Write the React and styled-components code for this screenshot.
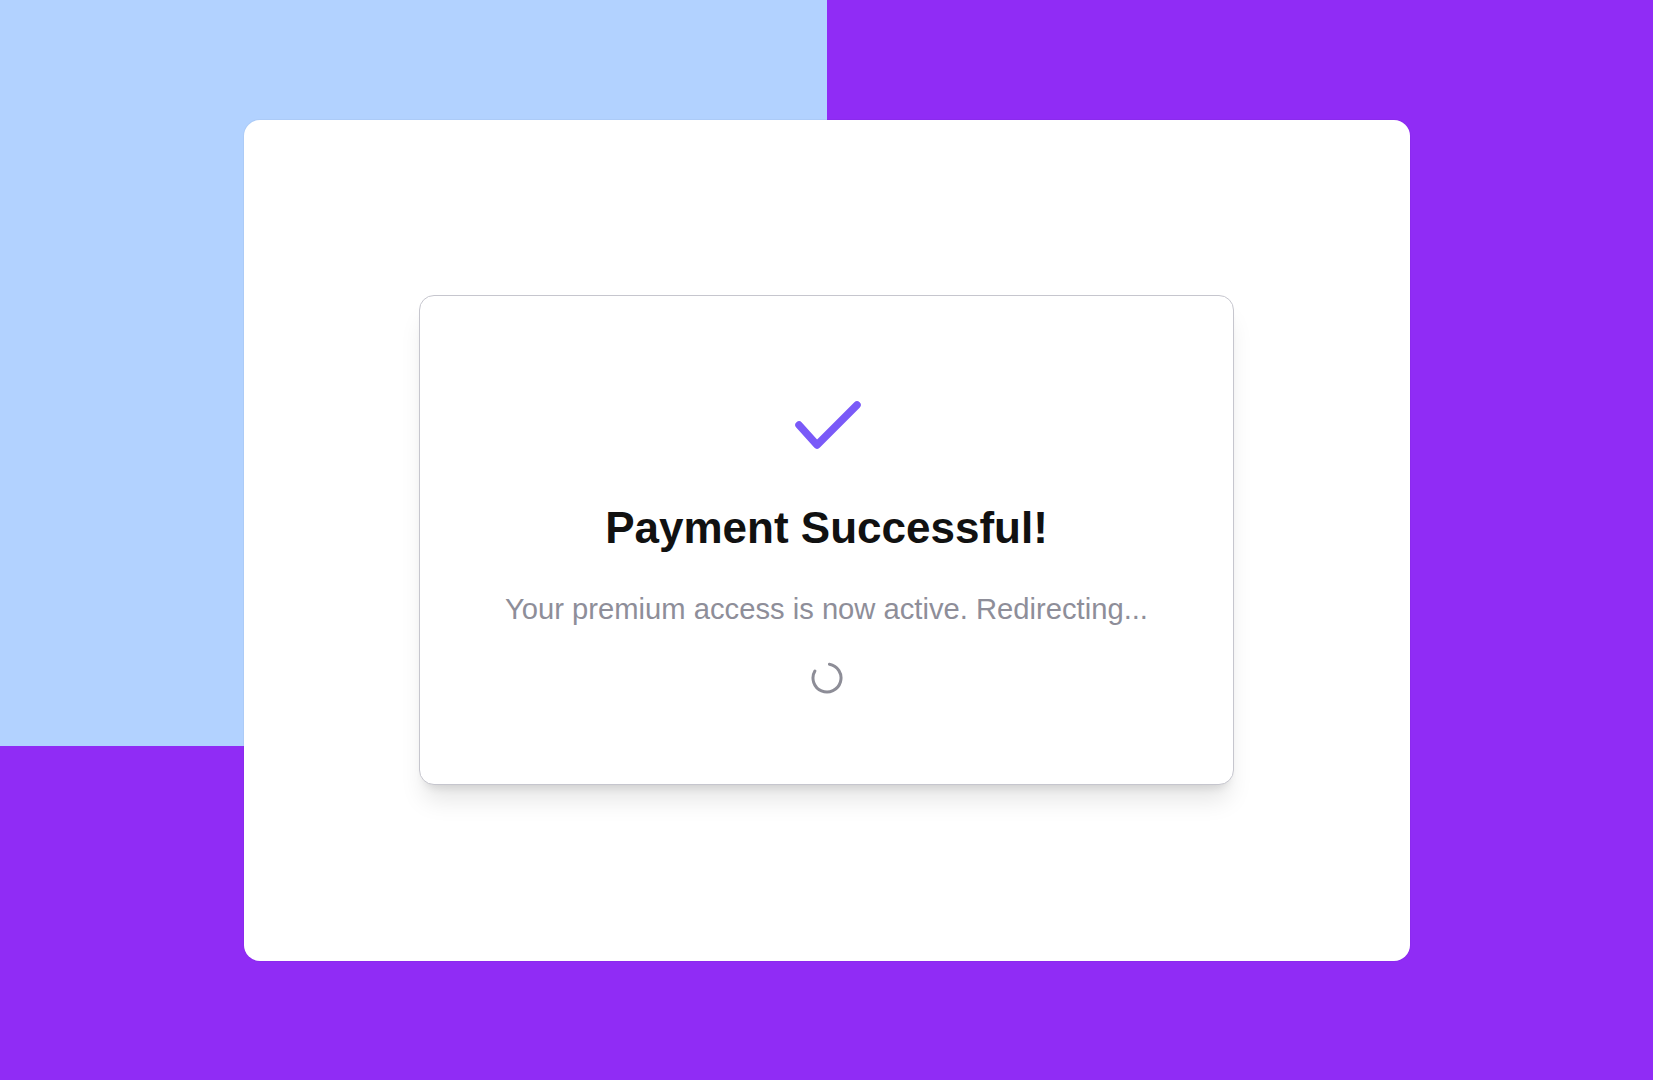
import React from 'react';
import styled, { createGlobalStyle } from 'styled-components';

const GlobalStyle = createGlobalStyle`
	* {
		box-sizing: border-box;
	}
	html,
	body {
		margin: 0;
		padding: 0;
	}
	body {
		font-family: 'Liberation Sans', Helvetica, Arial, sans-serif;
		-webkit-font-smoothing: antialiased;
	}
`;

const App = () => {
	return (
		<>
			<GlobalStyle />
			<Backdrop>
				<Panel>
					<SuccessCard>
						<CheckMark width="70" height="54" viewBox="0 0 70 54" fill="none">
							<polyline
								points="7,27 25,47 65,7"
								stroke="#7a5af8"
								strokeWidth="7.5"
								strokeLinecap="round"
								strokeLinejoin="round"
							/>
						</CheckMark>
						<Title>Payment Successful!</Title>
						<Message>Your premium access is now active. Redirecting...</Message>
						<Spinner width="32" height="32" viewBox="0 0 32 32" fill="none">
							<path
								d="M18.43 2.21 A14 14 0 1 1 3.88 9"
								stroke="#8d8d97"
								strokeWidth="3"
								strokeLinecap="round"
							/>
						</Spinner>
					</SuccessCard>
				</Panel>
			</Backdrop>
		</>
	);
};

const Backdrop = styled.div`
	width: 100%;
	min-height: 100vh;
	display: flex;
	align-items: center;
	justify-content: center;
	background:
		linear-gradient(#b2d2ff, #b2d2ff) 0 0 / 827px 746px no-repeat,
		#902cf5;
`;

const Panel = styled.main`
	width: 1166px;
	height: 841px;
	display: flex;
	align-items: center;
	justify-content: center;
	background: #ffffff;
	border-radius: 16px;
	box-shadow: 0 0 0 1px rgba(0, 0, 0, 0.03);
`;

const SuccessCard = styled.section`
	width: 815px;
	display: flex;
	flex-direction: column;
	align-items: center;
	padding: 102px 40px 90px;
	background: #ffffff;
	border: 1px solid #c6c6ce;
	border-radius: 15px;
	box-shadow:
		0 20px 25px -5px rgba(0, 0, 0, 0.1),
		0 8px 10px -6px rgba(0, 0, 0, 0.12);
`;

const CheckMark = styled.svg`
	display: block;
`;

const Title = styled.h1`
	margin: 50px 0 0;
	font-size: 44px;
	line-height: 1.2;
	font-weight: 700;
	color: #111111;
`;

const Message = styled.p`
	margin: 35px 0 0;
	font-size: 29.2px;
	line-height: 1.4;
	color: #8e8e99;
`;

const Spinner = styled.svg`
	display: block;
	margin-top: 32px;
`;

export default App;
